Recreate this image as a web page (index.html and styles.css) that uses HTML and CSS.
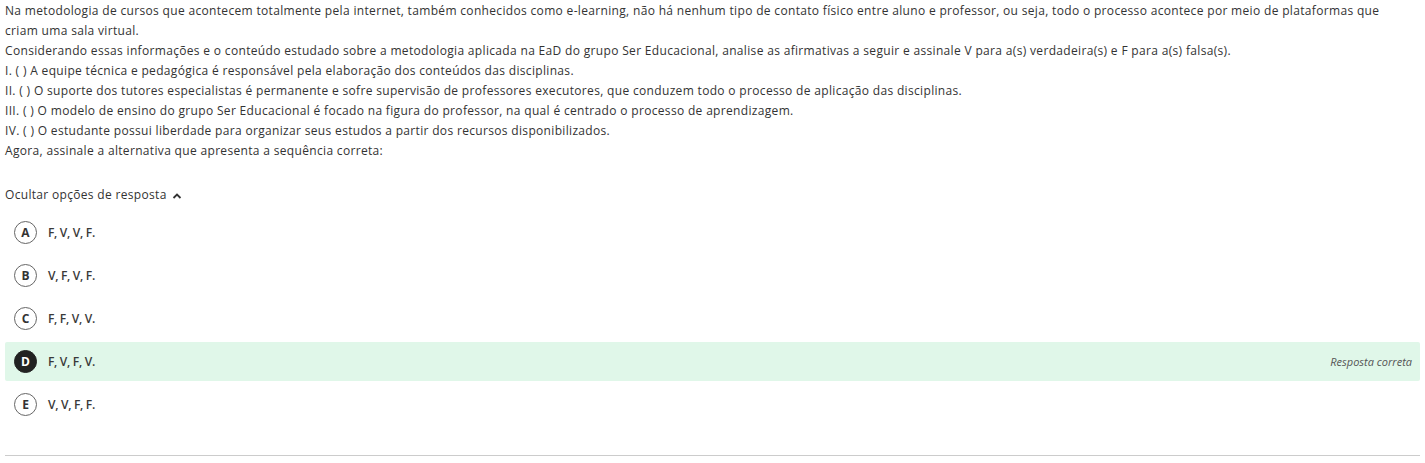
FILE: index.html
```html
<!DOCTYPE html>
<html lang="pt">
<head>
<meta charset="utf-8">
<link rel="stylesheet" href="styles.css">
</head>
<body>
<div class="page">
  <div class="statement">
    <p>Na metodologia de cursos que acontecem totalmente pela internet, também conhecidos como e-learning, não há nenhum tipo de contato físico entre aluno e professor, ou seja, todo o processo acontece por meio de plataformas que criam uma sala virtual.</p>
    <p>Considerando essas informações e o conteúdo estudado sobre a metodologia aplicada na EaD do grupo Ser Educacional, analise as afirmativas a seguir e assinale V para a(s) verdadeira(s) e F para a(s) falsa(s).</p>
    <p>I. ( ) A equipe técnica e pedagógica é responsável pela elaboração dos conteúdos das disciplinas.</p>
    <p>II. ( ) O suporte dos tutores especialistas é permanente e sofre supervisão de professores executores, que conduzem todo o processo de aplicação das disciplinas.</p>
    <p>III. ( ) O modelo de ensino do grupo Ser Educacional é focado na figura do professor, na qual é centrado o processo de aprendizagem.</p>
    <p>IV. ( ) O estudante possui liberdade para organizar seus estudos a partir dos recursos disponibilizados.</p>
    <p>Agora, assinale a alternativa que apresenta a sequência correta:</p>
  </div>
  <div class="toggle">Ocultar opções de resposta
    <svg class="caret" width="10" height="8" viewBox="0 0 10 8"><path d="M1.5 6 L5 2.5 L8.5 6" fill="none" stroke="#333" stroke-width="1.8"/></svg>
  </div>
  <ul class="options">
    <li class="option"><span class="letter">A</span><span class="text">F, V, V, F.</span></li>
    <li class="option"><span class="letter">B</span><span class="text">V, F, V, F.</span></li>
    <li class="option"><span class="letter">C</span><span class="text">F, F, V, V.</span></li>
    <li class="option correct"><span class="letter">D</span><span class="text">F, V, F, V.</span><span class="tag">Resposta correta</span></li>
    <li class="option"><span class="letter">E</span><span class="text">V, V, F, F.</span></li>
  </ul>
  <div class="rule"></div>
</div>
</body>
</html>
```
FILE: styles.css
```css
* { box-sizing: border-box; }
html, body { margin: 0; padding: 0; background: #fff; }
body {
  font-family: "Open Sans", "Liberation Sans", sans-serif;
  font-size: 12px;
  color: #333;
}
.page {
  width: 1425px;
  padding: 1px 5px 0 5px;
}
.statement { width: 1400px; }
.statement p {
  margin: 0;
  line-height: 20px;
  letter-spacing: 0.33px;
}
.toggle {
  margin-top: 24px;
  line-height: 20px;
  letter-spacing: 0.32px;
  display: flex;
  align-items: center;
  gap: 5px;
}
.caret { margin-top: 1px; }
.options {
  list-style: none;
  margin: 8px 0 0 0;
  padding: 0;
  display: flex;
  flex-direction: column;
  gap: 4px;
}
.option {
  height: 39px;
  display: flex;
  align-items: center;
  padding-left: 9px;
  padding-right: 8px;
  border-radius: 2px;
}
.letter {
  width: 23px;
  height: 23px;
  border: 1.5px solid #666;
  border-radius: 50%;
  display: flex;
  align-items: center;
  justify-content: center;
  font-weight: 700;
  font-size: 12px;
  color: #333;
  flex: none;
}
.text {
  margin-left: 11px;
  font-weight: 600;
  font-size: 12px;
  letter-spacing: -0.3px;
  color: #3a3a3a;
}
.correct { background: #e0f7e9; }
.correct .letter {
  background: #222;
  border-color: #222;
  color: #fff;
}
.tag {
  margin-left: auto;
  font-style: italic;
  font-size: 11px;
  color: #555;
}
.rule {
  margin-top: 31px;
  height: 1px;
  background: #ccc;
  width: 1415px;
}
```
